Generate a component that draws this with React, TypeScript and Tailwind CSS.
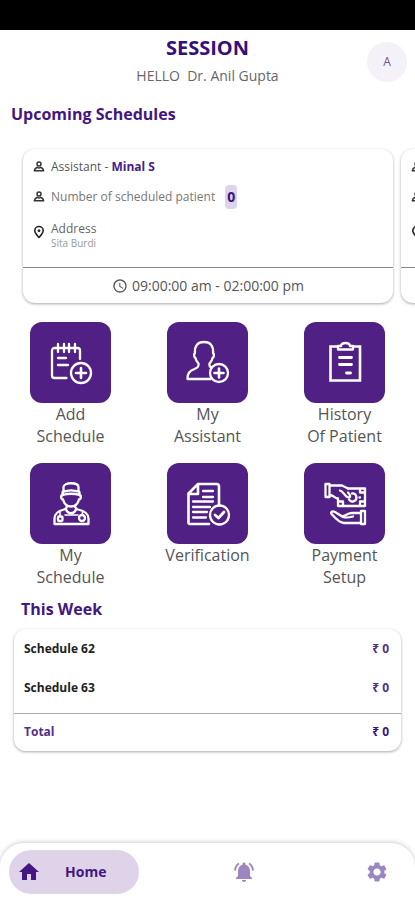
import { ReactNode } from "react";
import { MdAccessTime, MdHome, MdNotificationsActive, MdSettings } from "react-icons/md";

interface Session {
  id: number;
  assistant: string;
  patients: number;
  address: string;
  time: string;
}

const sessions: Session[] = [
  { id: 62, assistant: "Minal S", patients: 0, address: "Sita Burdi", time: "09:00:00 am - 02:00:00 pm" },
  { id: 63, assistant: "Minal S", patients: 0, address: "Sita Burdi", time: "09:00:00 am - 02:00:00 pm" },
];

function PersonIcon() {
  return (
    <svg className="w-3 h-3 shrink-0" viewBox="0 0 12 12" fill="none" stroke="#333" strokeWidth={1.5} strokeLinejoin="round">
      <circle cx="6" cy="3" r="2" />
      <path d="M4.4 6.2C2.600 6.800 1.600 7.800 1.300 9.800h9.400C10.400 7.800 9.400 6.800 7.600 6.200C6.600 7.200 5.400 7.200 4.400 6.200z" />
    </svg>
  );
}

function PinIcon() {
  return (
    <svg className="w-3 h-4 shrink-0" viewBox="0 0 12 16" fill="none" stroke="#222" strokeWidth={1.6} strokeLinejoin="round">
      <path d="M6 12.500C3.400 9.500 1.800 7.800 1.800 5.700a4.200 4.200 0 0 1 8.400 0c0 2.100-1.600 3.800-4.200 6.800z" />
      <circle cx="6" cy="5.7" r="1" fill="#222" strokeWidth={1} />
    </svg>
  );
}

function TileIcon({ children }: { children: ReactNode }) {
  return (
    <svg
      className="w-12 h-12"
      viewBox="0 0 48 48"
      fill="none"
      stroke="#fff"
      strokeWidth={2.3}
      strokeLinecap="round"
      strokeLinejoin="round"
    >
      {children}
    </svg>
  );
}

const addScheduleIcon = (
  <TileIcon>
    <path d="M19.5 39H7.500A2.500 2.500 0 0 1 5 36.500V11.500A2.500 2.500 0 0 1 7.500 9H30.500A2.500 2.500 0 0 1 33 11.500V20" />
    <path d="M11 5v8M17 5v8M22 5v8M28 5v8M11 19h8M11 26h10" />
    <circle cx="34" cy="34" r="10" />
    <path d="M34 29v10M29 34h10" strokeWidth={2.6} />
  </TileIcon>
);

const assistantIcon = (
  <TileIcon>
    <path d="M26.500 40H3.500c0-6 2-8 7-10c4-1.500 4.500-3 4-5.500c-2-2-2.800-3.500-3-5.500c-1.800-1-1.800-4-.6-5C10.500 7 13.500 3 20 3S29.500 7 29.100 14c1.200 1 1.200 4-.6 5c-.2 2-1 3.500-3 5.500c-.4 2 0 3 1.500 4" />
    <circle cx="35" cy="34" r="9" />
    <path d="M35 29.500v9M30.500 34h9" strokeWidth={2.6} />
  </TileIcon>
);

const historyIcon = (
  <TileIcon>
    <path d="M16 7.500H9.500v34H39V7.500H32" strokeLinejoin="miter" strokeWidth={2.6} />
    <path d="M17 10.500V7h3C20.500 3 28.500 3 29 7h3v3.500z" />
    <path d="M18.500 18.500h12M18.500 25.500h12M25.500 34h4" strokeWidth={2.8} />
  </TileIcon>
);

const doctorIcon = (
  <TileIcon>
    <path d="M16.500 12V7c0-5 15-5 15 0v5M15.500 12c5-2 12-2 17 0v3c-5-1.500-12-1.500-17 0z" />
    <path d="M16 15c-2.500 0-2.500 4 0 4.500c1 4 3.500 7 8 7s7-3 8-7c2.500-.5 2.500-4.500 0-4.500" />
    <path d="M20 26c0 2-1 3-3 3.500c-6 1.500-9.500 4-9.500 9V44h34v-5.500c0-5-3.500-7.500-10.500-9c-2-.5-3-1.500-3-3.500M19 29.500c2 5 8 5 10 0" />
    <path d="M13 31.500v4M35.500 31.500v3M18 35h13" strokeWidth={1.6} />
    <rect x="11" y="36.500" width="4.500" height="4.500" rx="1" />
    <circle cx="35" cy="38" r="3" />
  </TileIcon>
);

const verificationIcon = (
  <TileIcon>
    <path d="M25 44H6a1.500 1.500 0 0 1-1.500-1.500V13.500L14 4H32.500A2.500 2.500 0 0 1 35 6.500V25M5 14h9V4" strokeWidth={2.6} />
    <path d="M19 11h10M19 17h10M9 21.500h20M9 27h17M9 32h14M9 37.500h13" />
    <circle cx="35.500" cy="35" r="9.500" />
    <path d="M31 35l3.500 3l5.500-6" strokeWidth={2.8} />
  </TileIcon>
);

const paymentIcon = (
  <TileIcon>
    <path d="M4.500 4h4v13h-4zM8.500 5.500H21L27 8.500M8.500 15c4 0 5 3 8 3.500M19 10.500c4 1 5 7 9 7c2 0 1-3-1-5" />
    <path d="M27 8.500H44V26H17V18.500" />
    <path d="M31 13.500a4 4 0 1 1-3 6" />
    <path d="M39 9.500v3h4M43 21.500h-4v3.500M18 21.500h4V25M38.500 17.500h.5" />
    <path d="M40 31h4v13h-4zM40 33H31c-4 0-5 2-9 3c1 2.500 6 1.500 10 .5M22 37L14 32c-3-1.500-5 .5-3 2.500C15 39 19 43 23 43H40" />
  </TileIcon>
);

const tiles = [
  { lines: ["Add", "Schedule"], icon: addScheduleIcon },
  { lines: ["My", "Assistant"], icon: assistantIcon },
  { lines: ["History", "Of Patient"], icon: historyIcon },
  { lines: ["My", "Schedule"], icon: doctorIcon },
  { lines: ["Verification"], icon: verificationIcon },
  { lines: ["Payment", "Setup"], icon: paymentIcon },
];

function SessionCard({ session }: { session: Session }) {
  return (
    <article className="w-[calc(100%-22px)] shrink-0 rounded-xl bg-white shadow-[0_1px_3px_rgba(0,0,0,0.35)]">
      <div className="h-[118px] pl-2.5 pt-2 text-xs text-[#555]">
        <div className="flex h-5 items-center gap-1.5">
          <PersonIcon />
          <p>
            Assistant - <b className="text-[#48208a]">{session.assistant}</b>
          </p>
        </div>
        <div className="mt-2 flex h-6 items-center gap-1.5 text-[#777]">
          <PersonIcon />
          <p>Number of scheduled patient</p>
          <span className="ml-1 rounded bg-[#ddd3ea] px-0.5 text-sm leading-6 font-bold text-[#3b1280]">
            {session.patients}
          </span>
        </div>
        <div className="mt-3 flex gap-1.5">
          <div className="pt-1">
            <PinIcon />
          </div>
          <div>
            <p className="leading-4 text-[#666]">Address</p>
            <p className="text-[10px] leading-3 text-[#999]">{session.address}</p>
          </div>
        </div>
      </div>
      <div className="flex h-9 items-center justify-center gap-1 border-t border-[#888] text-sm text-[#555]">
        <MdAccessTime className="w-4 h-4" />
        <span>{session.time}</span>
      </div>
    </article>
  );
}

export default function App() {
  return (
    <div className="flex min-h-screen flex-col bg-white font-['Open_Sans','Noto_Sans',sans-serif]">
      <div className="h-[30px] bg-black" />

      <header className="grid grid-cols-[1fr_auto_1fr] items-center px-2 pt-1">
        <div />
        <div className="text-center">
          <h1 className="text-xl leading-7 font-bold text-[#35107a]">SESSION</h1>
          <p className="text-sm leading-7 whitespace-pre text-[#666]">HELLO  Dr. Anil Gupta</p>
        </div>
        <button className="h-10 w-10 justify-self-end rounded-full bg-[#f4f1f8] text-xs text-[#67518f]">A</button>
      </header>

      <main>
        <h2 className="mt-3 pl-[11px] text-base leading-6 font-bold text-[#431681]">Upcoming Schedules</h2>
        <div className="flex gap-2 overflow-x-auto pt-[23px] pb-2 pl-[23px] [scrollbar-width:none]">
          {sessions.map((session) => (
            <SessionCard key={session.id} session={session} />
          ))}
        </div>

        <div className="mt-[11px] grid grid-cols-3 gap-y-4 px-0.5">
          {tiles.map((tile) => (
            <button key={tile.lines.join(" ")} className="flex flex-col items-center text-base leading-[22px] text-[#555]">
              <span className="flex h-[81px] w-[81px] items-center justify-center rounded-xl bg-[#512085]">
                {tile.icon}
              </span>
              {tile.lines.map((line) => (
                <span key={line}>{line}</span>
              ))}
            </button>
          ))}
        </div>

        <h2 className="mt-[9px] pl-[21px] text-base leading-6 font-bold text-[#431681]">This Week</h2>
        <div className="mx-3.5 mt-2 rounded-xl shadow-[0_1px_3px_rgba(0,0,0,0.35)]">
          <table className="w-full text-xs font-bold">
            <tbody>
              {sessions.map((session) => (
                <tr key={session.id} className="h-[39px]">
                  <td className="pl-2.5 text-[#222]">Schedule {session.id}</td>
                  <td className="pr-3 text-right text-[#51308a]">₹ 0</td>
                </tr>
              ))}
              <tr className="h-1.5">
                <td colSpan={2} />
              </tr>
            </tbody>
            <tfoot>
              <tr className="h-[38px] border-t border-[#aaa]">
                <td className="pl-2.5 text-[#51308a]">Total</td>
                <td className="pr-3 text-right text-[#3b1280]">₹ 0</td>
              </tr>
            </tfoot>
          </table>
        </div>
      </main>

      <nav className="mt-auto flex h-[57px] items-center justify-between rounded-t-3xl bg-white pr-[26px] pl-[9px] shadow-[0_-1px_4px_rgba(60,50,90,0.25)]">
        <button className="flex h-11 w-[130px] items-center gap-6 rounded-full bg-[#dfd3e9] pl-2 text-sm font-bold text-[#431681]">
          <MdHome className="w-6 h-6" />
          Home
        </button>
        <button aria-label="Notifications" className="mr-4 text-[#9d86c0]">
          <MdNotificationsActive className="w-6 h-6" />
        </button>
        <button aria-label="Settings" className="text-[#9d86c0]">
          <MdSettings className="w-6 h-6" />
        </button>
      </nav>
    </div>
  );
}
